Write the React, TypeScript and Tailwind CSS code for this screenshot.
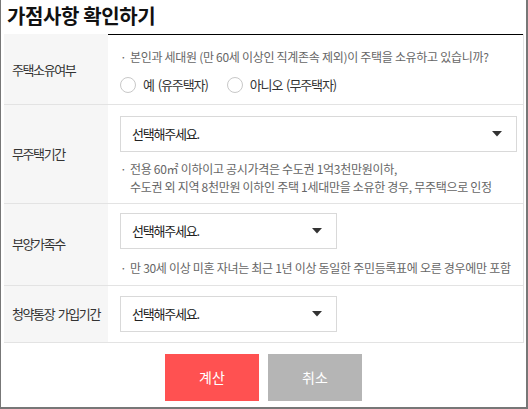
import React from 'react'

const font = { fontFamily: '"Noto Sans CJK KR", "Noto Sans", sans-serif' }

function Caret() {
  return (
    <svg width="10" height="6" viewBox="0 0 10 6" className="shrink-0">
      <path d="M0 0h10L5 5.5z" fill="#333" />
    </svg>
  )
}

function Select({ wide }: { wide?: boolean }) {
  return (
    <div
      className={`flex items-center justify-between h-[36px] border border-[#d9d9d9] bg-white pl-[11px] pr-[14px] text-[13px] tracking-[-1.2px] text-[#222] ${wide ? 'w-[397px]' : 'w-[217px]'}`}
    >
      <span>선택해주세요.</span>
      <Caret />
    </div>
  )
}

function Note({ children }: { children: React.ReactNode }) {
  return (
    <div className="flex text-[12px] leading-[18px] tracking-[-0.3px] text-[#666]">
      <span className="w-[10px] shrink-0">·</span>
      <div>{children}</div>
    </div>
  )
}

function Radio({ label }: { label: string }) {
  return (
    <label className="flex items-center gap-[7px]">
      <span className="w-[16px] h-[16px] rounded-full border border-[#c8c8c8] bg-white" />
      <span>{label}</span>
    </label>
  )
}

function Row({ label, children, className }: { label: string; children: React.ReactNode; className?: string }) {
  return (
    <div className="flex border-b border-[#e3e3e3]">
      <div className="w-[104px] shrink-0 bg-[#f6f6f6] flex items-center pl-[8px] text-[13px] tracking-[-1.4px] [word-spacing:2px] text-[#333] whitespace-nowrap">
        {label}
      </div>
      <div className={`flex-1 pl-[12px] ${className ?? ''}`}>{children}</div>
    </div>
  )
}

export default function App() {
  return (
    <div style={font} className="w-[528px] h-[409px] bg-white border-l border-r-2 border-b-2 border-[#777] box-border">
      <h1 className="h-[34px] pl-[6px] pt-[3px] text-[20px] font-bold text-[#111] leading-[26px] tracking-[-0.4px]">가점사항 확인하기</h1>
      <div className="ml-[3px] mr-[2px] border-r border-[#e3e3e3]">
        <div className="flex">
          <div className="w-[104px] shrink-0 bg-[#f6f6f6]" />
          <div className="flex-1 h-[1px] bg-black" />
        </div>
        <Row label="주택소유여부" className="pt-[13px] pb-[9px]">
          <Note>본인과 세대원 (만 60세 이상인 직계존속 제외)이 주택을 소유하고 있습니까?</Note>
          <div className="flex gap-[19px] mt-[9px] text-[13px] tracking-[-1.1px] [word-spacing:2px] text-[#333]">
            <Radio label="예 (유주택자)" />
            <Radio label="아니오 (무주택자)" />
          </div>
        </Row>
        <Row label="무주택기간" className="pt-[11px] pb-[7px]">
          <Select wide />
          <div className="mt-[8px]">
            <Note>
              전용 60㎡ 이하이고 공시가격은 수도권 1억3천만원이하,
              <br />
              수도권 외 지역 8천만원 이하인 주택 1세대만을 소유한 경우, 무주택으로 인정
            </Note>
          </div>
        </Row>
        <Row label="부양가족수" className="pt-[9px] pb-[8px]">
          <Select />
          <div className="mt-[10px]">
            <Note>만 30세 이상 미혼 자녀는 최근 1년 이상 동일한 주민등록표에 오른 경우에만 포함</Note>
          </div>
        </Row>
        <Row label="청약통장 가입기간" className="py-[10px]">
          <Select />
        </Row>
      </div>
      <div className="flex justify-center gap-[9px] pt-[11px]">
        <button className="w-[94px] h-[47px] bg-[#ff5151] text-white text-[14px]">계산</button>
        <button className="w-[94px] h-[47px] bg-[#b5b5b5] text-white text-[14px]">취소</button>
      </div>
    </div>
  )
}
